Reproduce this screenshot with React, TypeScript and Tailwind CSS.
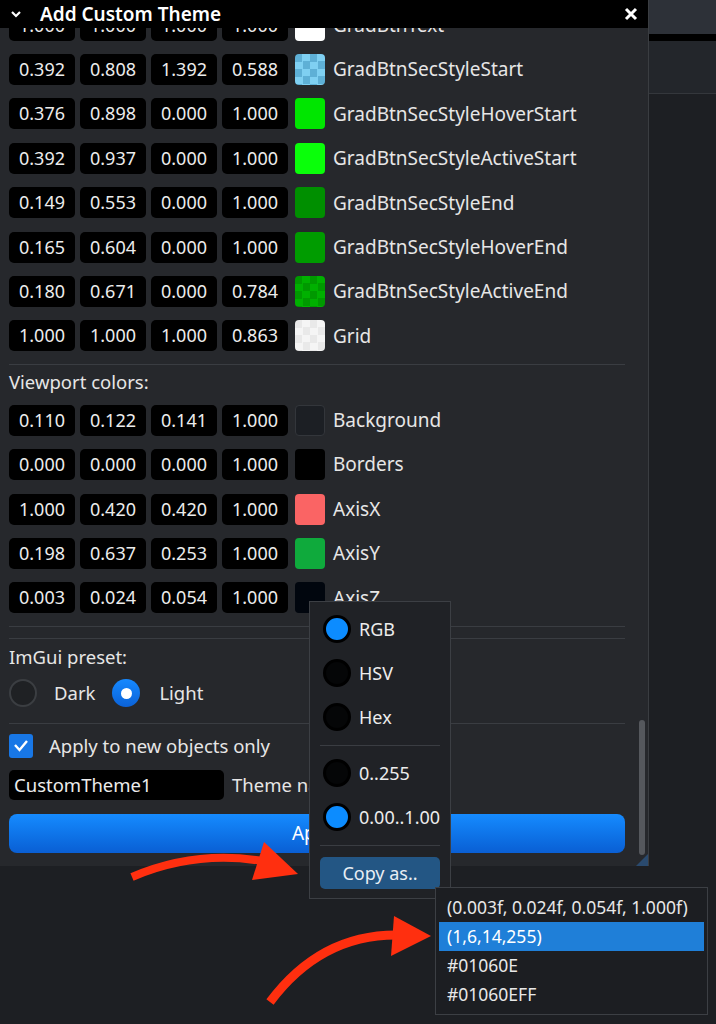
import React from "react";

type Row = { v: string[]; color: string; alt?: string; name: string; border?: boolean };

const themeRows: Row[] = [
  { v: ["1.000", "1.000", "1.000", "1.000"], color: "#ffffff", name: "GradBtnText" },
  { v: ["0.392", "0.808", "1.392", "0.588"], color: "#7fd0f2", alt: "#5eb0d6", name: "GradBtnSecStyleStart" },
  { v: ["0.376", "0.898", "0.000", "1.000"], color: "#00e600", name: "GradBtnSecStyleHoverStart" },
  { v: ["0.392", "0.937", "0.000", "1.000"], color: "#0aff0a", name: "GradBtnSecStyleActiveStart" },
  { v: ["0.149", "0.553", "0.000", "1.000"], color: "#008f00", name: "GradBtnSecStyleEnd" },
  { v: ["0.165", "0.604", "0.000", "1.000"], color: "#009c00", name: "GradBtnSecStyleHoverEnd" },
  { v: ["0.180", "0.671", "0.000", "0.784"], color: "#00b000", alt: "#009900", name: "GradBtnSecStyleActiveEnd" },
  { v: ["1.000", "1.000", "1.000", "0.863"], color: "#f5f5f5", alt: "#e9e9e9", name: "Grid" },
];

const viewportRows: Row[] = [
  { v: ["0.110", "0.122", "0.141", "1.000"], color: "#1c1f24", name: "Background", border: true },
  { v: ["0.000", "0.000", "0.000", "1.000"], color: "#000000", name: "Borders" },
  { v: ["1.000", "0.420", "0.420", "1.000"], color: "#fa6464", name: "AxisX" },
  { v: ["0.198", "0.637", "0.253", "1.000"], color: "#0faa3c", name: "AxisY" },
  { v: ["0.003", "0.024", "0.054", "1.000"], color: "#01060e", name: "AxisZ" },
];

const Swatch = ({ row }: { row: Row }) => {
  const style: React.CSSProperties = row.alt
    ? {
        backgroundImage: `conic-gradient(${row.color} 25%, ${row.alt} 0 50%, ${row.color} 0 75%, ${row.alt} 0)`,
        backgroundSize: "15px 15px",
      }
    : { backgroundColor: row.color };
  return (
    <div
      className={`w-[30px] h-[31px] rounded-[4px] ${row.border ? "border border-[#33363b]" : ""}`}
      style={style}
    />
  );
};

const ColorRow = ({ row }: { row: Row }) => (
  <div className="flex items-center h-[44.4px] gap-[5px]">
    {row.v.map((x, i) => (
      <div
        key={i}
        className="w-[66px] h-[31px] rounded-[5px] bg-black flex items-center justify-center text-[18px] text-[#ececec]"
      >
        {x}
      </div>
    ))}
    <div className="ml-[2px]">
      <Swatch row={row} />
    </div>
    <span className="ml-[3px] text-[19px] text-[#e6e6e6] whitespace-nowrap">{row.name}</span>
  </div>
);

const PopupRadio = ({ label, on }: { label: string; on?: boolean }) => (
  <div className="flex items-center h-[44px] pl-[13px] gap-[8px]">
    <div
      className={`w-[28px] h-[28px] rounded-full border-[3px] border-black ${on ? "bg-[#0c8cff]" : "bg-[#050607]"}`}
    />
    <span className="text-[18px] text-[#ececec]">{label}</span>
  </div>
);

export default function App() {
  return (
    <div
      className="relative w-[716px] h-[1024px] overflow-hidden bg-[#1d1f23]"
      style={{ fontFamily: '"Noto Sans", "Open Sans", sans-serif' }}
    >
      <div className="flex">
        {/* window */}
        <div className="w-[649px] h-[866px] flex flex-col bg-[#26282c] border-r border-[#3a3d41]">
          <div className="h-[28px] bg-black flex items-center shrink-0 relative z-10">
            <svg width="12" height="10" viewBox="0 0 12 10" className="ml-[10px]">
              <path d="M2 3 L6 7 L10 3" stroke="white" strokeWidth="2.2" fill="none" />
            </svg>
            <span className="ml-[18px] text-[19px] font-semibold text-white leading-none">Add Custom Theme</span>
            <svg width="14" height="14" viewBox="0 0 14 14" className="ml-auto mr-[10px]">
              <path d="M2 2 L12 12 M12 2 L2 12" stroke="white" strokeWidth="3" />
            </svg>
          </div>
          <div className="relative flex-1 overflow-hidden">
            <div className="pl-[9px] pr-[23px] -mt-[25px] flex flex-col">
              {themeRows.map((r) => (
                <ColorRow key={r.name} row={r} />
              ))}
              <div className="h-px bg-[#3a3d42] mt-[6px]" />
              <div className="h-[33px] flex items-center text-[18.5px] text-[#e6e6e6]">Viewport colors:</div>
              {viewportRows.map((r) => (
                <ColorRow key={r.name} row={r} />
              ))}
              <div className="h-px bg-[#3a3d42] mt-[6px]" />
              <div className="h-px bg-[#3a3d42] mt-[11px]" />
              <div className="h-[35px] flex items-center text-[18.5px] text-[#e6e6e6]">ImGui preset:</div>
              <div className="h-[38px] flex items-center">
                <div className="w-[28px] h-[28px] rounded-full bg-[#1f2124] border-2 border-[#3b3e42]" />
                <span className="ml-[17px] text-[18.5px] text-[#e6e6e6]">Dark</span>
                <div className="ml-[17px] w-[28px] h-[28px] rounded-full bg-gradient-to-b from-[#1689ff] to-[#0b62d8] flex items-center justify-center">
                  <div className="w-[11px] h-[11px] rounded-full bg-white" />
                </div>
                <span className="ml-[19px] text-[18.5px] text-[#e6e6e6]">Light</span>
              </div>
              <div className="h-px bg-[#3a3d42] mt-[11px]" />
              <div className="h-[43px] flex items-center">
                <div className="w-[24px] h-[24px] rounded-[3px] bg-[#1877e6] flex items-center justify-center">
                  <svg width="16" height="14" viewBox="0 0 16 14">
                    <path d="M2 6 L6.5 11 L14 2" stroke="white" strokeWidth="2.4" fill="none" />
                  </svg>
                </div>
                <span className="ml-[16px] text-[18.5px] text-[#e6e6e6]">Apply to new objects only</span>
              </div>
              <div className="flex items-center h-[30px] mt-[3px]">
                <div className="w-[215px] h-[30px] rounded-[5px] bg-black flex items-center pl-[5px] text-[18.5px] text-[#ececec]">
                  CustomTheme1
                </div>
                <span className="ml-[8px] text-[18.5px] text-[#e6e6e6]">Theme name</span>
              </div>
              <div className="mt-[14px] h-[39px] rounded-[8px] bg-gradient-to-b from-[#168bff] to-[#0a5fd4] flex items-center justify-center text-[19px] text-white">
                Apply
              </div>
            </div>
            <div className="absolute right-[3px] top-[692px] w-[6px] h-[135px] rounded-full bg-[#55585d]" />
            <div className="absolute right-0 bottom-0 w-0 h-0 border-l-[12px] border-l-transparent border-b-[12px] border-b-[#2a4a6e]" />
          </div>
        </div>
        {/* background window strip */}
        <div className="flex-1 flex flex-col">
          <div className="h-[34px] bg-[#2d3138]" />
          <div className="h-[7px] bg-black" />
          <div className="h-[53px] bg-[#23262b] border-b border-[#34373c]" />
        </div>
      </div>

      {/* color options popup */}
      <div className="absolute left-[309px] top-[601px] w-[142px] h-[298px] bg-[#202226] border border-[#3c3f44] pt-[5px] flex flex-col">
        <PopupRadio label="RGB" on />
        <PopupRadio label="HSV" />
        <PopupRadio label="Hex" />
        <div className="h-px bg-[#3a3d42] mx-[10px] mt-[6px] mb-[5px]" />
        <PopupRadio label="0..255" />
        <PopupRadio label="0.00..1.00" on />
        <div className="h-px bg-[#3a3d42] mx-[10px] mt-[6px]" />
        <div className="mx-[10px] mt-[11px] h-[32px] rounded-[5px] bg-[#235684] flex items-center justify-center text-[18px] text-[#e8eef4]">
          Copy as..
        </div>
      </div>

      {/* copy as menu */}
      <div className="absolute left-[435px] top-[887px] w-[273px] h-[128px] bg-[#1c1e22] border border-[#3c3f44] py-[5px] px-[3px] flex flex-col text-[17.5px] text-[#e8e8e8]">
        <div className="h-[29px] flex items-center px-[8px] whitespace-nowrap">(0.003f, 0.024f, 0.054f, 1.000f)</div>
        <div className="h-[29px] flex items-center px-[8px] bg-[#1f7fd8] text-white">(1,6,14,255)</div>
        <div className="h-[29px] flex items-center px-[8px]">#01060E</div>
        <div className="h-[29px] flex items-center px-[8px]">#01060EFF</div>
      </div>

      {/* annotation arrows */}
      <svg className="absolute left-0 top-0 pointer-events-none" width="716" height="1024" viewBox="0 0 716 1024">
        <path d="M132 877 Q195 850 262 861" stroke="#ff2f0f" strokeWidth="8" fill="none" strokeLinecap="butt" />
        <polygon points="298,874 264,842 252,880" fill="#ff2f0f" />
        <path d="M270 1002 Q320 935 396 935" stroke="#ff2f0f" strokeWidth="9" fill="none" />
        <polygon points="431,936 394,916 391,956" fill="#ff2f0f" />
      </svg>
    </div>
  );
}
